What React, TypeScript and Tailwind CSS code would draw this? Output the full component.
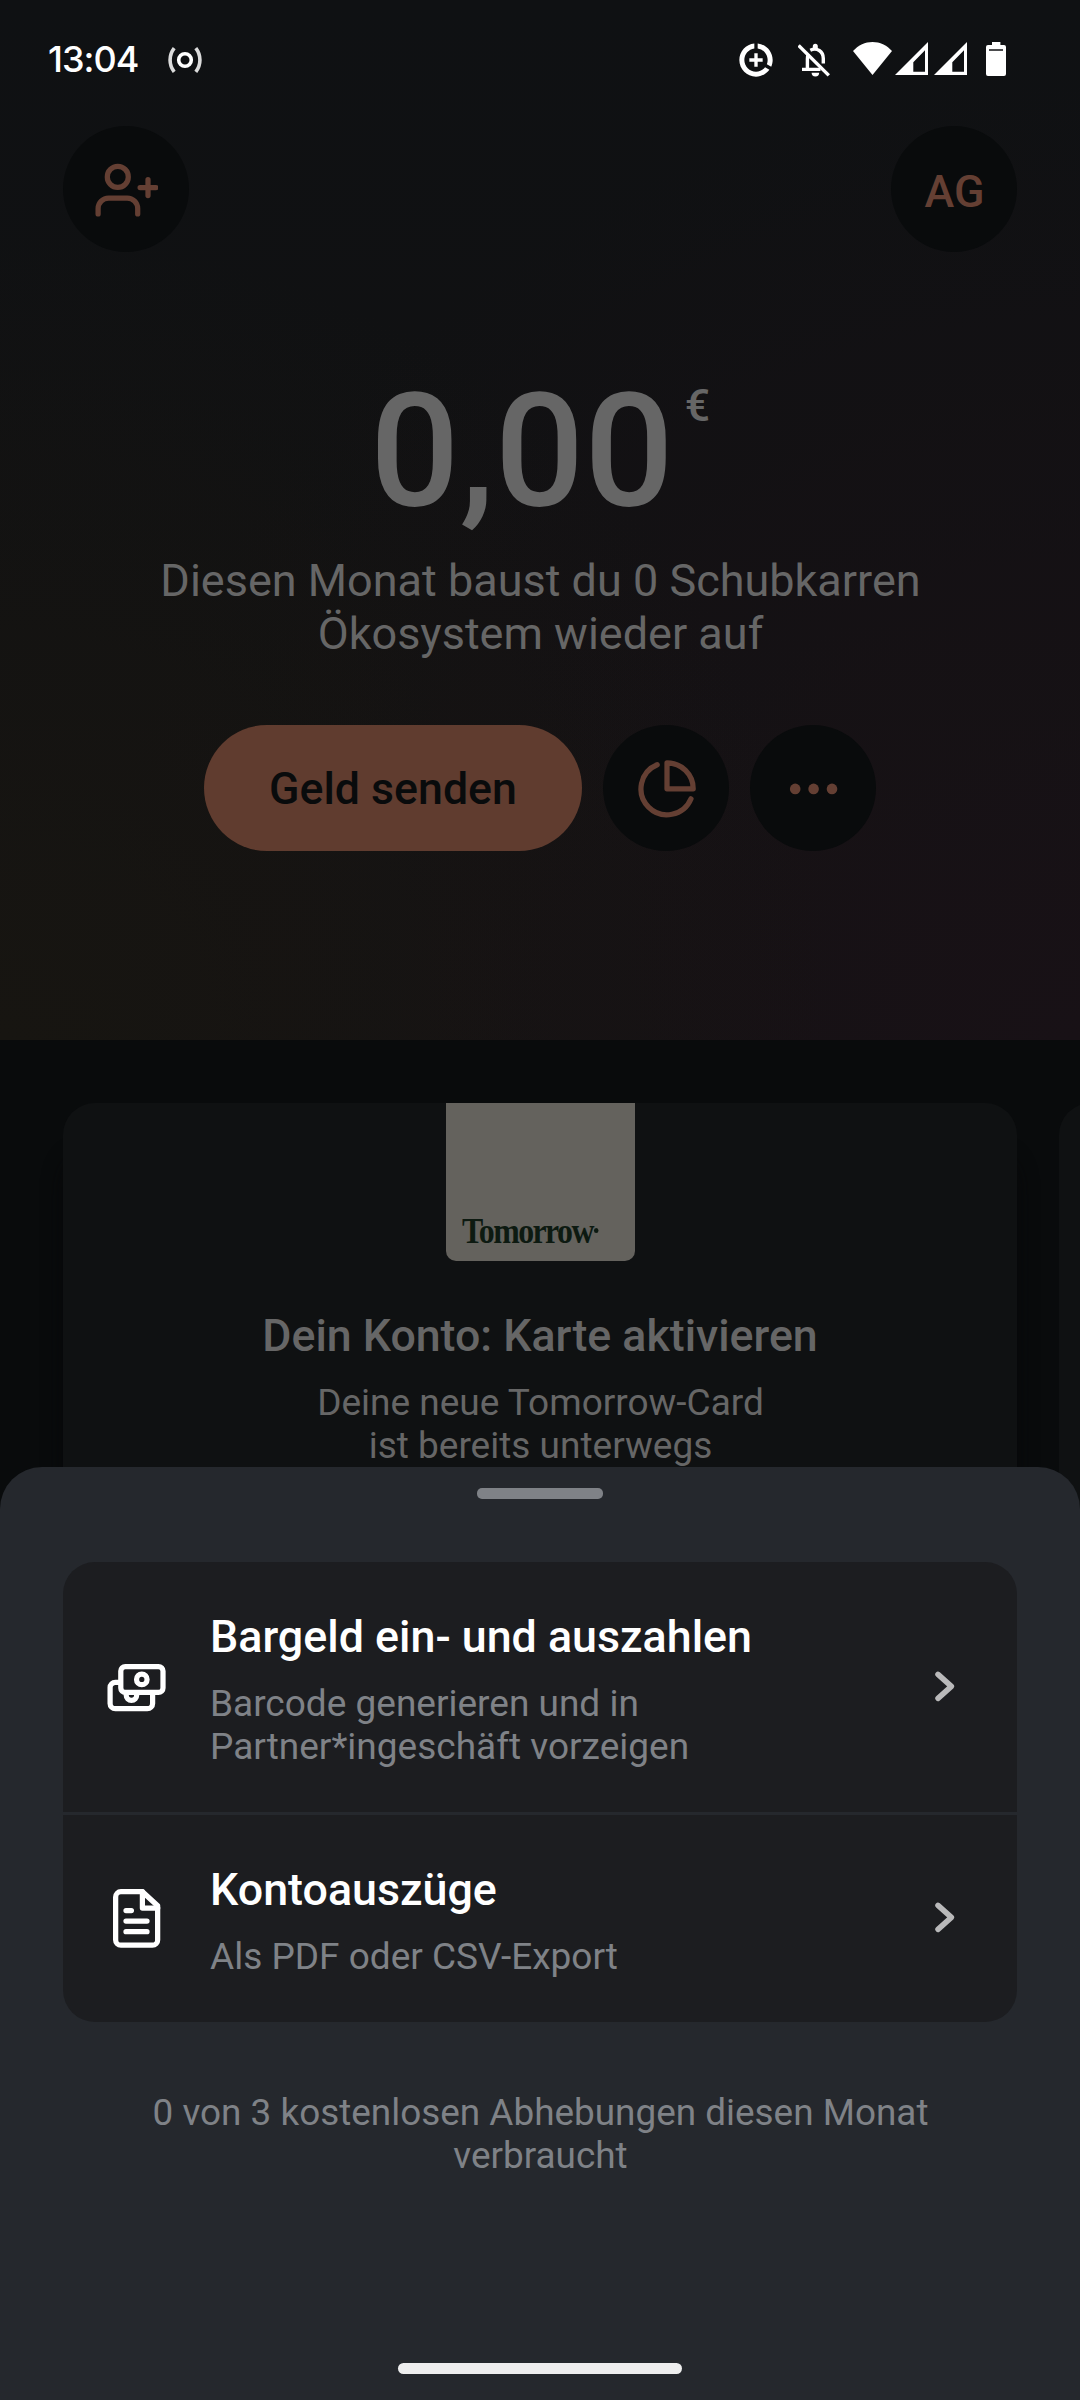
import type { ReactNode } from 'react';

interface MenuRowProps {
  icon: ReactNode;
  title: string;
  children: ReactNode;
  className?: string;
}

function StatusBar() {
  return (
    <div className="flex h-[126px] items-start justify-between pl-[48px] pr-[74px] pt-[42px] text-white">
      <div className="flex items-start">
        <span className="w-[120px] font-['Inter','Roboto',sans-serif] text-[36px] font-medium leading-[35px] tracking-[-1px]">
          13:04
        </span>
        <svg className="mt-[5px] h-[26px] w-[34px]" viewBox="0 0 34 26" fill="none" stroke="currentColor" strokeWidth="3.6">
          <circle cx="17" cy="13" r="6.3" />
          <path d="M6.2 1.2C.7 8.3.7 17.7 6.2 24.8M27.8 1.2c5.5 7.1 5.5 16.5 0 23.6" strokeOpacity="0.85" />
        </svg>
      </div>

      <div className="flex items-start">
        {/* Data saver */}
        <svg className="-mt-[2px] mr-[22px] h-[40px] w-[40px]" viewBox="0 0 24 24" fill="currentColor">
          <path d="M11 8v3H8v2h3v3h2v-3h3v-2h-3V8h-2zm2-5.95v3.03c3.39.49 6 3.39 6 6.92 0 .9-.18 1.75-.48 2.54l2.6 1.53c.56-1.24.88-2.62.88-4.07 0-5.18-3.95-9.45-9-9.95zM12 19c-3.87 0-7-3.13-7-7 0-3.53 2.61-6.43 6-6.92V2.05c-5.06.5-9 4.76-9 9.95 0 5.52 4.47 10 9.99 10 3.31 0 6.24-1.61 8.06-4.09l-2.6-1.53C16.17 17.98 14.21 19 12 19z" />
        </svg>
        {/* Notifications off */}
        <svg className="mr-[22px] mt-[1px] h-[34px] w-[33px]" viewBox="0 0 33 34" fill="none" stroke="currentColor" strokeWidth="3.4">
          <path d="M.6 2.4l30.2 30" />
          <path d="M9.4 26.5V16c0-1.9.3-3.6 1-5M4 26.4h18.5M12.3 7.2C19 4 25.3 8.5 25.3 15.5v5" />
          <path d="M14.8 6V3.2a2.5 2.5 0 0 1 5 0V6zM13.6 29.8h7.6a3.8 3.6 0 0 1-7.6 0z" fill="currentColor" stroke="none" />
        </svg>
        {/* Wifi */}
        <svg className="mr-[3px] h-[33px] w-[39px]" viewBox="0 0 39 33" fill="currentColor">
          <path d="M19.5 33L0 9C5.5 3 12 0 19.5 0S33.5 3 39 9z" />
        </svg>
        <SignalIcon className="mr-[6px] h-[33px] w-[33px]" />
        <SignalIcon className="mr-[19px] h-[33px] w-[33px]" />
        {/* Battery */}
        <svg className="h-[34px] w-[20px]" viewBox="0 0 20 34" fill="currentColor">
          <path
            fillRule="evenodd"
            d="M6 0h8.4v3H18a2 2 0 0 1 2 2v27a2 2 0 0 1-2 2H2a2 2 0 0 1-2-2V5a2 2 0 0 1 2-2h4zM3 7.2v1.5h14V7.2z"
          />
        </svg>
      </div>
    </div>
  );
}

function SignalIcon({ className }: { className?: string }) {
  return (
    <svg className={className} viewBox="0 0 33 33" fill="currentColor">
      <path fillRule="evenodd" d="M0 33L33 0v33zM18.3 29.8H30V8.3L18.3 20.3z" />
    </svg>
  );
}

function CircleButton({ children }: { children: ReactNode }) {
  return (
    <button className="flex h-[126px] w-[126px] items-center justify-center rounded-full bg-[#090b0c] text-[#643f33]">
      {children}
    </button>
  );
}

function MenuRow({ icon, title, children, className = '' }: MenuRowProps) {
  return (
    <div className={`flex items-center bg-[#1c1d20] px-[42px] ${className}`}>
      <div className="w-[105px] text-white">{icon}</div>
      <div className="flex-1 pt-[5px]">
        <p className="text-[44.8px] font-medium leading-[52px] text-white">{title}</p>
        <p className="mt-[19px] text-[37px] leading-[43px] text-[#7f8287]">{children}</p>
      </div>
      <svg className="h-[63px] w-[63px]" viewBox="0 0 63 63" fill="none" stroke="#b9b9ba" strokeWidth="5.5" strokeLinecap="round" strokeLinejoin="round">
        <path d="M26 18.4l13.4 12L26 42.4" />
      </svg>
    </div>
  );
}

export default function App() {
  return (
    <div className="flex h-[2400px] w-[1080px] flex-col overflow-hidden bg-[#090b0c] font-['Roboto',sans-serif]">
      {/* Balance */}
      <header className="h-[1040px] bg-[radial-gradient(ellipse_at_0%_100%,#171511_0%,transparent_55%),radial-gradient(ellipse_at_100%_100%,#181116_0%,transparent_65%),linear-gradient(#0f1113,#111112_60%,#141213)]">
        <StatusBar />

        <div className="flex justify-between px-[63px]">
          <CircleButton>
            <svg className="h-[63px] w-[63px]" viewBox="0 0 63 63" fill="none" stroke="currentColor" strokeWidth="5.25" strokeLinecap="round">
              <circle cx="22.8" cy="18.9" r="10.5" />
              <path d="M3.1 55.9v-5.4A10.5 10.5 0 0 1 13.6 40h18.6a10.5 10.5 0 0 1 10.5 10.5v5.4M53 21.7v15.8M45.1 29.6h15.8" />
            </svg>
          </CircleButton>
          <CircleButton>
            <span className="pl-[1px] pt-[5px] text-[44.8px] font-medium leading-[52px]">AG</span>
          </CircleButton>
        </div>

        <div className="mt-[107px] flex items-start justify-center text-[#666]">
          <span className="text-[157.5px] font-medium leading-[185px]">0,00</span>
          <span className="ml-[11px] mt-[21px] text-[44.6px] font-medium leading-[52px]">€</span>
        </div>
        <p className="mt-[10px] pl-[1px] text-center text-[45px] leading-[53px] text-[#666]">
          Diesen Monat baust du 0 Schubkarren
          <br />
          Ökosystem wieder auf
        </p>

        <div className="mt-[65px] flex justify-center gap-[21px]">
          <button className="h-[126px] w-[378px] rounded-full bg-[#603c2f] pt-[3px] text-[44.7px] font-medium text-[#090b0c]">
            Geld senden
          </button>
          <CircleButton>
            <svg className="h-[63px] w-[63px]" viewBox="0 0 63 63" fill="none" stroke="currentColor" strokeWidth="5.25" strokeLinecap="round" strokeLinejoin="round">
              <path d="M22.2 7.7A26 26 0 1 0 56 41.8" />
              <path d="M32 5.8v26h26.2A26.2 26 0 0 0 32 5.8z" />
            </svg>
          </CircleButton>
          <CircleButton>
            <svg className="h-[63px] w-[63px]" viewBox="0 0 63 63" fill="currentColor">
              <circle cx="13.2" cy="31.9" r="5.3" />
              <circle cx="31.6" cy="31.9" r="5.3" />
              <circle cx="50" cy="31.9" r="5.3" />
            </svg>
          </CircleButton>
        </div>
      </header>

      {/* Card carousel */}
      <section className="flex h-[472px] shrink-0 gap-[42px] overflow-hidden pl-[63px] pt-[63px]">
        <div className="flex w-[954px] shrink-0 flex-col items-center rounded-t-[32px] bg-[#0f1112] text-center text-[#666] shadow-[0_50px_20px_rgba(8,8,9,0.8)]">
          <div className="flex h-[158px] w-[189px] items-end rounded-b-[10px] bg-[#64625d] pb-[12px] pl-[16px]">
            {/* Wordmark */}
            <div className="flex origin-left scale-x-[0.91] items-end text-[#0d1a11]">
              <span className="whitespace-nowrap font-['Liberation_Serif',serif] text-[35px] font-bold leading-[34px] tracking-[-1.7px]">
                Tomorrow
              </span>
              <span className="mb-[16px] ml-[1px] h-[5px] w-[5px] shrink-0 rounded-full bg-[#0d1a11]" />
            </div>
          </div>
          <p className="mt-[49px] text-[44.7px] font-medium leading-[52px]">Dein Konto: Karte aktivieren</p>
          <p className="mt-[19px] pl-[1px] text-[37px] leading-[43px]">
            Deine neue Tomorrow-Card
            <br />
            ist bereits unterwegs
          </p>
        </div>
        <div className="w-[954px] shrink-0 rounded-t-[32px] bg-[#0f1112]" />
      </section>

      {/* Bottom sheet */}
      <div className="relative -mt-[45px] flex h-[933px] shrink-0 flex-col items-center rounded-t-[42px] bg-[#25282d] pt-[21px]">
        <div className="h-[11px] w-[126px] rounded-[5px] bg-[#7f8287]" />

        <div className="mt-[63px] flex w-[954px] flex-col gap-[3px] overflow-hidden rounded-[32px]">
          <MenuRow
            className="h-[250px]"
            title="Bargeld ein- und auszahlen"
            icon={
              <svg className="h-[63px] w-[63px]" viewBox="0 0 63 63" fill="none" stroke="currentColor" strokeWidth="5.25">
                <rect x="15.8" y="10.6" width="42.2" height="25.8" rx="4.5" />
                <circle cx="36.8" cy="23.4" r="5.25" />
                <path d="M15.8 26.3h-5.4a5.3 5.3 0 0 0-5.3 5.3v15.8a5.3 5.3 0 0 0 5.3 5.3h31.9a5.3 5.3 0 0 0 5.3-5.3v-11M21.2 38v1.1a5.25 5.25 0 0 0 10.5 0V38" />
              </svg>
            }
          >
            Barcode generieren und in
            <br />
            Partner*ingeschäft vorzeigen
          </MenuRow>
          <MenuRow
            className="h-[207px]"
            title="Kontoauszüge"
            icon={
              <svg className="h-[63px] w-[63px]" viewBox="0 0 63 63" fill="none" stroke="currentColor" strokeWidth="5.25" strokeLinecap="round" strokeLinejoin="round">
                <path d="M37.4 4.7H15.9a5.25 5.25 0 0 0-5.25 5.25v43a5.25 5.25 0 0 0 5.25 5.25h31.5a5.25 5.25 0 0 0 5.25-5.25V18.8z" />
                <path d="M37.4 4.7V21h15.3M21 23.5h5.4M21 34.1h21M21 44.7h21" />
              </svg>
            }
          >
            Als PDF oder CSV-Export
          </MenuRow>
        </div>

        <p className="mt-[69px] w-[828px] pl-[1px] text-center text-[36.9px] leading-[43px] text-[#7f8287]">
          0 von 3 kostenlosen Abhebungen diesen Monat verbraucht
        </p>
        <div className="mb-[26px] mt-auto h-[11px] w-[284px] rounded-full bg-[#eee]" />
      </div>
    </div>
  );
}
